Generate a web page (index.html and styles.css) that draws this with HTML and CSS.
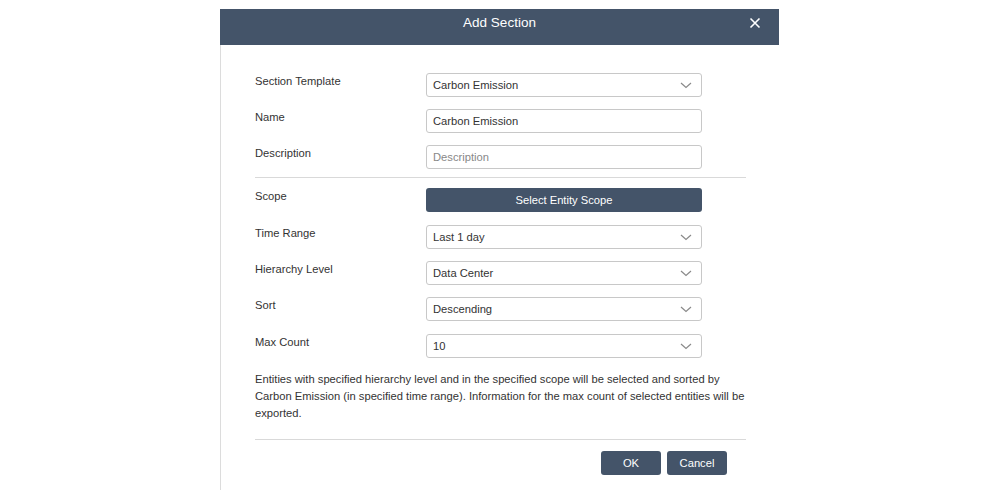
FILE: index.html
```html
<!DOCTYPE html>
<html>
<head>
<meta charset="utf-8">
<link rel="stylesheet" href="styles.css">
</head>
<body>
<div class="dialog">
  <div class="header">
    <span class="title">Add Section</span>
    <span class="close">
      <svg width="12" height="12" viewBox="0 0 12 12"><path d="M1.5 1.5 L10.5 10.5 M10.5 1.5 L1.5 10.5" stroke="#fff" stroke-width="1.6" fill="none"/></svg>
    </span>
  </div>
  <div class="body">
    <div class="row">
      <div class="label">Section Template</div>
      <div class="field select"><span>Carbon Emission</span><svg class="chev" width="12" height="7" viewBox="0 0 12 7"><path d="M1 1 L6 5.5 L11 1" stroke="#8a8a8a" stroke-width="1.2" fill="none"/></svg></div>
    </div>
    <div class="row">
      <div class="label">Name</div>
      <div class="field"><span>Carbon Emission</span></div>
    </div>
    <div class="row">
      <div class="label">Description</div>
      <div class="field"><span class="ph">Description</span></div>
    </div>
    <div class="divider first"></div>
    <div class="row mb13">
      <div class="label">Scope</div>
      <div class="btn wide">Select Entity Scope</div>
    </div>
    <div class="row">
      <div class="label">Time Range</div>
      <div class="field select"><span>Last 1 day</span><svg class="chev" width="12" height="7" viewBox="0 0 12 7"><path d="M1 1 L6 5.5 L11 1" stroke="#8a8a8a" stroke-width="1.2" fill="none"/></svg></div>
    </div>
    <div class="row">
      <div class="label">Hierarchy Level</div>
      <div class="field select"><span>Data Center</span><svg class="chev" width="12" height="7" viewBox="0 0 12 7"><path d="M1 1 L6 5.5 L11 1" stroke="#8a8a8a" stroke-width="1.2" fill="none"/></svg></div>
    </div>
    <div class="row mb13">
      <div class="label">Sort</div>
      <div class="field select"><span>Descending</span><svg class="chev" width="12" height="7" viewBox="0 0 12 7"><path d="M1 1 L6 5.5 L11 1" stroke="#8a8a8a" stroke-width="1.2" fill="none"/></svg></div>
    </div>
    <div class="row last">
      <div class="label">Max Count</div>
      <div class="field select"><span>10</span><svg class="chev" width="12" height="7" viewBox="0 0 12 7"><path d="M1 1 L6 5.5 L11 1" stroke="#8a8a8a" stroke-width="1.2" fill="none"/></svg></div>
    </div>
    <p class="note">Entities with specified hierarchy level and in the specified scope will be selected and sorted by Carbon Emission (in specified time range). Information for the max count of selected entities will be exported.</p>
    <div class="divider"></div>
    <div class="actions">
      <div class="btn small">OK</div>
      <div class="btn small">Cancel</div>
    </div>
  </div>
</div>
</body>
</html>
```
FILE: styles.css
```css
html, body {
  margin: 0;
  padding: 0;
  background: #fff;
}
body {
  font-family: "Liberation Sans", Arial, sans-serif;
  color: #333;
}
.dialog {
  margin: 9px 0 0 220px;
  width: 559px;
  height: 481px;
  border-left: 1px solid #dcdcdc;
  box-sizing: border-box;
  background: #fff;
}
.header {
  height: 36px;
  margin-left: -1px;
  background: #445469;
  display: flex;
  align-items: flex-start;
  justify-content: center;
  position: relative;
  box-sizing: border-box;
  padding-top: 6px;
}
.title {
  color: #fff;
  font-size: 13.5px;
  line-height: 16px;
}
.close {
  position: absolute;
  right: 18px;
  top: 8px;
  width: 12px;
  height: 12px;
  display: flex;
}
.body {
  padding: 28px 33px 0 34px;
}
.row {
  display: flex;
  align-items: flex-start;
  height: 24px;
  margin-bottom: 12px;
}
.row.mb13 {
  margin-bottom: 13px;
}
.row.last {
  margin-bottom: 0;
}
.label {
  width: 171px;
  font-size: 11.2px;
  line-height: 16px;
  color: #333;
}
.field {
  width: 276px;
  height: 24px;
  box-sizing: border-box;
  border: 1px solid #c8c8c8;
  border-radius: 3px;
  display: flex;
  align-items: center;
  justify-content: space-between;
  padding: 0 9px 0 6px;
  font-size: 11.2px;
  color: #333;
}
.ph {
  color: #888;
}
.chev {
  display: block;
}
.divider {
  height: 1px;
  background: #d9d9d9;
}
.divider.first {
  margin: -4px 0 10px 0;
}
.btn {
  background: #445469;
  color: #fff;
  border-radius: 3px;
  height: 24px;
  display: flex;
  align-items: center;
  justify-content: center;
  font-size: 11.2px;
  box-sizing: border-box;
}
.btn.wide {
  width: 276px;
}
.note {
  margin: 13px 0 17px 0;
  font-size: 11.2px;
  line-height: 17px;
  color: #333;
}
.actions {
  display: flex;
  justify-content: flex-end;
  gap: 6px;
  padding: 11px 19px 0 0;
}
.btn.small {
  width: 60px;
}
```
